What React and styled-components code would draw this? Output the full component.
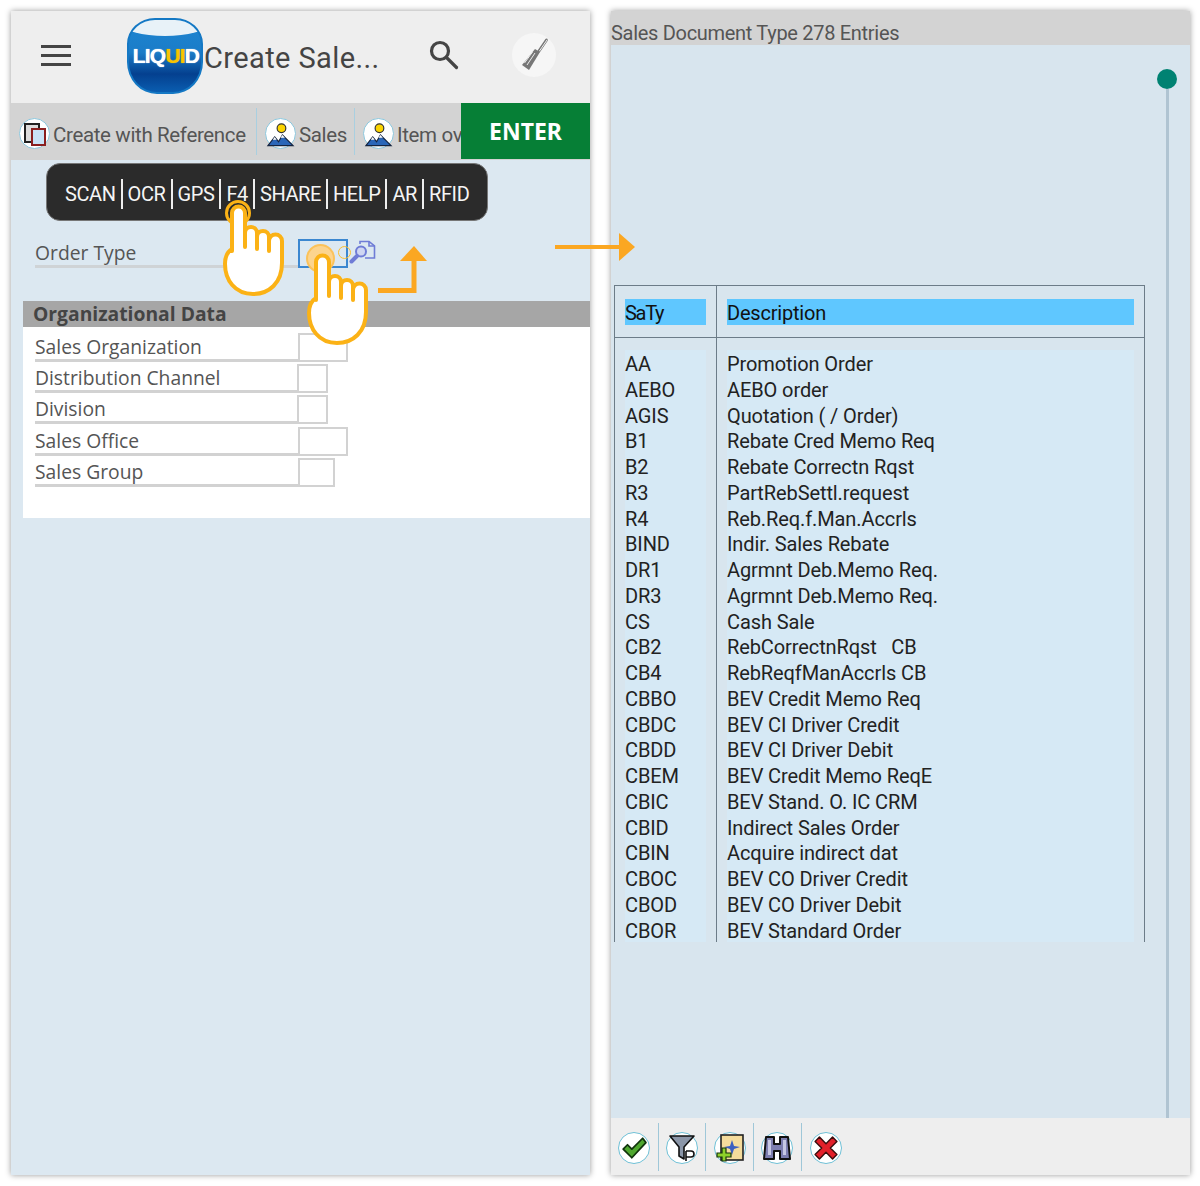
import React from 'react'
import styled, { createGlobalStyle } from 'styled-components'

const GlobalStyle = createGlobalStyle`
  html, body { margin: 0; padding: 0; background: #fff; }
  * { box-sizing: border-box; }
`

const toolbarItems = [
  { label: 'Create with Reference', icon: 'copy', width: 239 },
  { label: 'Sales', icon: 'picture', width: 98 },
  { label: 'Item ov', icon: 'picture', width: 106 },
]
const actions = ['SCAN', 'OCR', 'GPS', 'F4', 'SHARE', 'HELP', 'AR', 'RFID']
const orgFields = [
  { label: 'Sales Organization', width: 50 },
  { label: 'Distribution Channel', width: 31, left: -1 },
  { label: 'Division', width: 31, left: -1 },
  { label: 'Sales Office', width: 50 },
  { label: 'Sales Group', width: 37 },
]
const entries = [
  ['AA', 'Promotion Order'],
  ['AEBO', 'AEBO order'],
  ['AGIS', 'Quotation ( / Order)'],
  ['B1', 'Rebate Cred Memo Req'],
  ['B2', 'Rebate Correctn Rqst'],
  ['R3', 'PartRebSettl.request'],
  ['R4', 'Reb.Req.f.Man.Accrls'],
  ['BIND', 'Indir. Sales Rebate'],
  ['DR1', 'Agrmnt Deb.Memo Req.'],
  ['DR3', 'Agrmnt Deb.Memo Req.'],
  ['CS', 'Cash Sale'],
  ['CB2', 'RebCorrectnRqst   CB'],
  ['CB4', 'RebReqfManAccrls CB'],
  ['CBBO', 'BEV Credit Memo Req'],
  ['CBDC', 'BEV CI Driver Credit'],
  ['CBDD', 'BEV CI Driver Debit'],
  ['CBEM', 'BEV Credit Memo ReqE'],
  ['CBIC', 'BEV Stand. O. IC CRM'],
  ['CBID', 'Indirect Sales Order'],
  ['CBIN', 'Acquire indirect dat'],
  ['CBOC', 'BEV CO Driver Credit'],
  ['CBOD', 'BEV CO Driver Debit'],
  ['CBOR', 'BEV Standard Order'],
]

function CopyIcon() {
  return (
    <svg width="24" height="24" viewBox="0 0 24 24">
      <rect x="2" y="2" width="14" height="18" fill="#ddd" stroke="#222" strokeWidth="2" />
      <rect x="9" y="7" width="13" height="16" fill="#c9e3f7" stroke="#8a2020" strokeWidth="2" />
    </svg>
  )
}

function PictureIcon() {
  return (
    <svg width="30" height="30" viewBox="0 0 30 30">
      <circle cx="16" cy="9" r="4.5" fill="#fbd400" stroke="#333" strokeWidth="1.2" />
      <path d="M2 27 L9 18 L13 23 L17 16 L28 27 Z" fill="#2a66b8" stroke="#14243f" strokeWidth="1.2" />
      <path d="M7 21 L9 18 L11 21 Z M15 19 L17 16 L19.5 19 Z" fill="#fff" />
    </svg>
  )
}

function SearchIcon() {
  return (
    <svg width="30" height="30" viewBox="0 0 30 30" fill="none" stroke="#444" strokeWidth="3.2" strokeLinecap="round">
      <circle cx="11" cy="11" r="8.5" />
      <path d="M17.5 17.5 L27.5 27.5" />
    </svg>
  )
}

function ToolIcon() {
  return (
    <svg width="32" height="36" viewBox="0 0 32 36">
      <path d="M28.5 3 L21 14" stroke="#777" strokeWidth="3" strokeLinecap="round" fill="none" />
      <path d="M29 3 L21.5 14" stroke="#eee" strokeWidth="1" strokeLinecap="round" fill="none" />
      <path d="M22 15 L11 33 L4 28 L17 12 Z" fill="#777" />
      <path d="M17 16 L9 28 M14.5 15 L6.5 26" stroke="#eee" strokeWidth="1" />
    </svg>
  )
}

function LookupIcon() {
  return (
    <svg width="27" height="25" viewBox="0 0 27 25" fill="none" stroke="#6f7cd6" strokeWidth="1.6">
      <path d="M11 4 V1.5 H20 L25.5 6 V18 H16" />
      <path d="M20 1.5 V6 H25.5" />
      <circle cx="12" cy="11.5" r="5" fill="#cfd6f2" strokeWidth="2" />
      <path d="M8 16 L2.5 21.5" strokeWidth="4" strokeLinecap="round" />
    </svg>
  )
}

function HandIcon() {
  return (
    <svg width="64" height="94" viewBox="0 0 64 94" fill="#fff" stroke="#fbb216" strokeWidth="4" strokeLinecap="round" strokeLinejoin="round">
      <path d="M9 48 V10 a6.5 6.5 0 0 1 13 0 V30 a6 6 0 0 1 12 0 V34 a6 6 0 0 1 12 0 V38 a6 6 0 0 1 13 0 V60 C59 80 46 91 30 91 C12 91 2 77 2 61 C2 53 4 49 9 46 Z" />
      <path d="M22 30 V44 M34 34 V46 M46 38 V48" fill="none" />
    </svg>
  )
}

function CheckIcon() {
  return (
    <svg width="28" height="26" viewBox="0 0 24 24">
      <path d="M2 13 L6 9 L10 13 L20 3 L23 7 L10 21 Z" fill="#4ea72e" stroke="#10330c" strokeWidth="1.6" strokeLinejoin="round" />
    </svg>
  )
}

function FilterIcon() {
  return (
    <svg width="26" height="28" viewBox="0 0 26 28">
      <path d="M1 2 H25 L15 13 V25 L10 22 V13 Z" fill="#8b96a8" stroke="#111" strokeWidth="1.6" strokeLinejoin="round" />
      <path d="M17 17 h5 a2.5 2.5 0 0 1 0 6 h-5 M17 17 V27" fill="none" stroke="#111" strokeWidth="1.6" />
    </svg>
  )
}

function NewIcon() {
  return (
    <svg width="28" height="28" viewBox="0 0 28 28">
      <rect x="5" y="1" width="22" height="25" fill="#f4dc9c" stroke="#222" strokeWidth="1.6" />
      <path d="M16 6 L18 12 L24 13 L18 15 L16 21 L14 15 L8 13 L14 12 Z" fill="#3a5fc0" />
      <path d="M1 19 H6 V14 H10 V19 H15 V23 H10 V27 H6 V23 H1 Z" fill="#8ed02a" stroke="#15330c" strokeWidth="1.2" />
    </svg>
  )
}

function BinocularIcon() {
  return (
    <svg width="28" height="26" viewBox="0 0 28 26">
      <path d="M3 2 H11 V9 H17 V2 H25 L27 24 H17 V16 H11 V24 H1 Z" fill="#7d7eb0" stroke="#111" strokeWidth="2" strokeLinejoin="round" />
      <rect x="5" y="5" width="3" height="15" fill="#c7c8e4" />
      <rect x="20" y="5" width="3" height="15" fill="#c7c8e4" />
    </svg>
  )
}

function CloseIcon() {
  return (
    <svg width="24" height="24" viewBox="0 0 22 22">
      <path d="M1 5 L5 1 L11 7 L17 1 L21 5 L15 11 L21 17 L17 21 L11 15 L5 21 L1 17 L7 11 Z" fill="#e2202a" stroke="#3a0d0d" strokeWidth="1.3" strokeLinejoin="round" />
    </svg>
  )
}

const footerIcons = [CheckIcon, FilterIcon, NewIcon, BinocularIcon, CloseIcon]

export default function App() {
  return (
    <>
      <GlobalStyle />
      <Page>
        <Phone>
          <Header>
            <MenuButton><span /><span /><span /></MenuButton>
            <Logo>
              <LogoWave />
              <LogoText>LIQ<em>UI</em>D</LogoText>
            </Logo>
            <Title>Create Sale...</Title>
            <SearchButton><SearchIcon /></SearchButton>
            <ToolButton><ToolIcon /></ToolButton>
          </Header>
          <Toolbar>
            <ToolItems>
              {toolbarItems.map((item, i) => (
                <ToolItem key={item.label} $width={item.width} $first={i === 0} $last={i === toolbarItems.length - 1}>
                  <RoundIcon>{item.icon === 'copy' ? <CopyIcon /> : <PictureIcon />}</RoundIcon>
                  <ToolLabel>{item.label}</ToolLabel>
                </ToolItem>
              ))}
            </ToolItems>
            <EnterButton>ENTER</EnterButton>
          </Toolbar>
          <Content>
            <ActionBar>
              {actions.map((action) => (
                <Action key={action}>{action}</Action>
              ))}
            </ActionBar>
            <OrderRow>
              <OrderLabel>Order Type</OrderLabel>
              <OrderInput />
              <LookupButton><LookupIcon /></LookupButton>
            </OrderRow>
            <Section>
              <SectionTitle>Organizational Data</SectionTitle>
              <Fields>
                {orgFields.map((field) => (
                  <FieldRow key={field.label}>
                    <FieldLabel>{field.label}</FieldLabel>
                    <FieldBox $width={field.width} $left={field.left} />
                  </FieldRow>
                ))}
              </Fields>
            </Section>
          </Content>
          <TouchRing />
          <HandOne><HandIcon /></HandOne>
          <TouchDot />
          <SmallRing />
          <HandTwo><HandIcon /></HandTwo>
          <UpArrow>
            <svg width="50" height="50" viewBox="0 0 50 50">
              <path d="M1 45.5 H37 V12" fill="none" stroke="#fba722" strokeWidth="5" />
              <path d="M37 1 L50 16 H23 Z" fill="#fba722" />
            </svg>
          </UpArrow>
        </Phone>

        <Phone>
          <ListTitle>Sales Document Type 278 Entries</ListTitle>
          <ListBody>
            <TableWrap>
              <TableHead>
                <HeadCell $first><HeadText $tight>SaTy</HeadText></HeadCell>
                <HeadCell><HeadText>Description</HeadText></HeadCell>
              </TableHead>
              <TableBody>
                <Column $first>
                  <Shade>
                    {entries.map(([code]) => <Entry key={code}>{code}</Entry>)}
                  </Shade>
                </Column>
                <Column>
                  <Shade>
                    {entries.map(([code, text]) => <Entry key={code}>{text}</Entry>)}
                  </Shade>
                </Column>
              </TableBody>
            </TableWrap>
            <ScrollTrack>
              <ScrollDot />
              <ScrollLine />
            </ScrollTrack>
          </ListBody>
          <Footer>
            {footerIcons.map((Icon, i) => (
              <FooterItem key={i} $last={i === footerIcons.length - 1}>
                <FooterRound><Icon /></FooterRound>
              </FooterItem>
            ))}
          </Footer>
        </Phone>

        <RightArrow>
          <svg width="80" height="28" viewBox="0 0 80 28">
            <path d="M0 14 H68" stroke="#fba722" strokeWidth="4" />
            <path d="M64 0 L80 14 L64 28 Z" fill="#fba722" />
          </svg>
        </RightArrow>
      </Page>
    </>
  )
}

const Page = styled.div`
  position: relative;
  width: 1200px;
  height: 1186px;
  padding: 11px 10px 11px 11px;
  display: flex;
  gap: 21px;
  background: #fff;
`
const Phone = styled.div`
  position: relative;
  width: 579px;
  height: 1164px;
  display: flex;
  flex-direction: column;
  background: #dce8f1;
  box-shadow: 0 0 6px rgba(0, 0, 0, 0.4);
`
const Header = styled.div`
  height: 92px;
  flex-shrink: 0;
  display: flex;
  align-items: center;
  padding-left: 30px;
  background: #eeeeee;
`
const MenuButton = styled.div`
  width: 30px;
  height: 21px;
  margin: 0 56px 3px 0;
  display: flex;
  flex-direction: column;
  justify-content: space-between;
  span {
    height: 3px;
    background: #444;
  }
`
const Logo = styled.div`
  position: relative;
  width: 76px;
  height: 76px;
  margin: 0 1px 2px 0;
  border-radius: 28px 28px 30px 30px / 26px 26px 32px 32px;
  overflow: hidden;
  background: linear-gradient(#1c86d2 0%, #1b7cc8 45%, #04408f 75%, #0a5db0 100%);
  border: 2px solid #1478c4;
`
const LogoWave = styled.div`
  position: absolute;
  left: -6px;
  right: -6px;
  top: -8px;
  height: 24px;
  background: #e8f2f8;
  border-radius: 0 0 50% 50%;
`
const LogoText = styled.div`
  position: absolute;
  left: 2px;
  right: 0;
  top: 24px;
  text-align: center;
  color: #fff;
  font-family: 'Liberation Sans', sans-serif;
  font-weight: 700;
  font-size: 21px;
  letter-spacing: -0.8px;
  text-shadow: 0 0 1px #fff;
  em {
    color: #f9c400;
    font-style: normal;
    text-shadow: 0 0 1px #f9c400;
  }
`
const Title = styled.div`
  width: 205px;
  margin-top: 2px;
  font-family: Roboto, sans-serif;
  font-size: 29px;
  letter-spacing: 0.4px;
  color: #444;
  white-space: nowrap;
`
const SearchButton = styled.div`
  width: 40px;
  height: 40px;
  margin: 0 0 4px 15px;
  display: flex;
  align-items: center;
  justify-content: center;
`
const ToolButton = styled.div`
  width: 44px;
  height: 44px;
  margin: 0 0 4px 48px;
  border-radius: 50%;
  background: #f6f6f6;
  display: flex;
  align-items: center;
  justify-content: center;
`
const Toolbar = styled.div`
  height: 57px;
  flex-shrink: 0;
  display: flex;
  align-items: flex-start;
  background: #d3d3d3;
`
const ToolItems = styled.div`
  flex: 1;
  min-width: 0;
  display: flex;
  padding: 5px 0 0 7px;
  overflow: hidden;
`
const ToolItem = styled.div`
  width: ${(p) => p.$width}px;
  flex-shrink: 0;
  height: 47px;
  display: flex;
  align-items: center;
  gap: 3px;
  padding-top: 4px;
  padding-left: ${(p) => (p.$first ? '1px' : '8px')};
  border-right: ${(p) => (p.$last ? 'none' : '1px solid #a9cfe0')};
`
const RoundIcon = styled.div`
  width: 31px;
  height: 31px;
  flex-shrink: 0;
  border-radius: 50%;
  border: 1px solid #8cc7dd;
  background: #fff;
  display: flex;
  align-items: center;
  justify-content: center;
`
const ToolLabel = styled.div`
  margin-top: 2px;
  font-family: Roboto, sans-serif;
  font-size: 20.5px;
  letter-spacing: -0.35px;
  color: #555;
  white-space: nowrap;
`
const EnterButton = styled.div`
  flex-shrink: 0;
  width: 129px;
  height: 56px;
  display: flex;
  align-items: center;
  justify-content: center;
  background: #067f36;
  color: #fff;
  font-family: 'Noto Sans', sans-serif;
  font-weight: 700;
  font-size: 23px;
`
const Content = styled.div`
  flex: 1;
  display: flex;
  flex-direction: column;
  background: #dce8f1;
`
const ActionBar = styled.div`
  width: 442px;
  height: 58px;
  margin: 3px 0 0 35px;
  padding: 3px 0 0 18px;
  display: flex;
  align-items: center;
  background: #2b2b2b;
  border-radius: 14px;
  border: 1px solid #777;
`
const Action = styled.div`
  height: 30px;
  display: flex;
  align-items: center;
  padding: 0 5px;
  color: #f5f5f5;
  font-family: Roboto, sans-serif;
  font-size: 20px;
  letter-spacing: -0.4px;
  border-right: 2px solid #eee;
  &:first-child {
    padding-left: 0;
  }
  &:last-child {
    border-right: none;
  }
`
const OrderRow = styled.div`
  height: 30px;
  margin: 18px 0 0 24px;
  display: flex;
  align-items: flex-start;
`
const OrderLabel = styled.div`
  width: 263px;
  height: 29px;
  color: #555;
  font-family: 'Open Sans', sans-serif;
  font-size: 19.3px;
  line-height: 27px;
  border-bottom: 3px solid #cfd3d6;
`
const OrderInput = styled.div`
  width: 50px;
  height: 29px;
  border: 2px solid #3b87d0;
`
const LookupButton = styled.div`
  margin: 1px 0 0 1px;
`
const Section = styled.div`
  margin: 32px 0 0 12px;
  height: 217px;
  background: #fff;
`
const SectionTitle = styled.div`
  height: 26px;
  padding-left: 10px;
  background: #a6a6a6;
  color: #444;
  font-family: 'Open Sans', sans-serif;
  font-weight: 700;
  font-size: 19.3px;
  line-height: 26px;
`
const Fields = styled.div`
  padding: 6px 0 0 12px;
  display: flex;
  flex-direction: column;
  gap: 2.2px;
`
const FieldRow = styled.div`
  height: 29px;
  display: flex;
`
const FieldLabel = styled.div`
  width: 263px;
  height: 29px;
  color: #555;
  font-family: 'Open Sans', sans-serif;
  font-size: 19.3px;
  line-height: 27px;
  border-bottom: 3px solid #d2d2d2;
`
const FieldBox = styled.div`
  width: ${(p) => p.$width}px;
  height: 29px;
  margin-left: ${(p) => p.$left || 0}px;
  background: #fff;
  border: 2px solid #d2d2d2;
`
const TouchRing = styled.div`
  position: absolute;
  left: 214px;
  top: 189px;
  width: 26px;
  height: 26px;
  border-radius: 50%;
  border: 3px solid #fbb216;
  background: #2b2b2b;
`
const HandOne = styled.div`
  position: absolute;
  left: 212px;
  top: 192px;
  line-height: 0;
`
const TouchDot = styled.div`
  position: absolute;
  left: 295px;
  top: 233px;
  width: 29px;
  height: 29px;
  border-radius: 50%;
  background: #fcd48e;
  border: 2px solid #fbc25a;
`
const SmallRing = styled.div`
  position: absolute;
  left: 327px;
  top: 235px;
  width: 13px;
  height: 13px;
  border-radius: 50%;
  border: 1.5px solid #fbc030;
`
const HandTwo = styled.div`
  position: absolute;
  left: 296px;
  top: 241px;
  line-height: 0;
`
const UpArrow = styled.div`
  position: absolute;
  left: 366px;
  top: 234px;
  line-height: 0;
`
const RightArrow = styled.div`
  position: absolute;
  left: 555px;
  top: 233px;
  line-height: 0;
`
const ListTitle = styled.div`
  height: 34px;
  flex-shrink: 0;
  padding-top: 10px;
  background: #d3d3d3;
  color: #555;
  font-family: Roboto, sans-serif;
  font-size: 20px;
  letter-spacing: -0.3px;
  line-height: 24px;
  white-space: nowrap;
`
const ListBody = styled.div`
  flex: 1;
  display: flex;
  padding-left: 3px;
  background: #d8e5ee;
`
const TableWrap = styled.div`
  width: 531px;
  padding-top: 240px;
  display: flex;
  flex-direction: column;
`
const TableHead = styled.div`
  height: 53px;
  display: grid;
  grid-template-columns: 102px 1fr;
  border: 1px solid #6c7c88;
`
const HeadCell = styled.div`
  padding: 13px 10px 0;
  border-right: ${(p) => (p.$first ? '1px solid #6c7c88' : 'none')};
`
const HeadText = styled.div`
  height: 26px;
  background: #5fc7ff;
  color: #111;
  font-family: Roboto, sans-serif;
  font-size: 20px;
  letter-spacing: ${(p) => (p.$tight ? '-1.3px' : '-0.2px')};
  line-height: 28px;
`
const TableBody = styled.div`
  height: 604px;
  display: grid;
  grid-template-columns: 102px 1fr;
  border-left: 1px solid #6c7c88;
  border-right: 1px solid #6c7c88;
`
const Column = styled.div`
  padding: 12px 10px 0;
  border-right: ${(p) => (p.$first ? '1px solid #6c7c88' : 'none')};
`
const Shade = styled.div`
  height: 592px;
  background: #d6e9f5;
`
const Entry = styled.div`
  height: 25.75px;
  line-height: 29px;
  color: #222;
  font-family: Roboto, sans-serif;
  font-size: 20px;
  letter-spacing: -0.1px;
  white-space: pre;
`
const ScrollTrack = styled.div`
  width: 20px;
  margin-left: 12px;
  padding-top: 24px;
  display: flex;
  flex-direction: column;
  align-items: center;
`
const ScrollDot = styled.div`
  width: 20px;
  height: 20px;
  flex-shrink: 0;
  border-radius: 50%;
  background: #008272;
`
const ScrollLine = styled.div`
  flex: 1;
  width: 3px;
  background: #b0c4d2;
`
const Footer = styled.div`
  height: 57px;
  flex-shrink: 0;
  display: flex;
  align-items: center;
  background: #eeeeee;
`
const FooterItem = styled.div`
  width: 47.7px;
  height: 48px;
  padding-top: 3px;
  display: flex;
  align-items: center;
  justify-content: center;
  border-right: ${(p) => (p.$last ? 'none' : '1px solid #9fc7d8')};
`
const FooterRound = styled.div`
  width: 32px;
  height: 32px;
  border-radius: 50%;
  border: 1px solid #6fc0d6;
  background: #fff;
  display: flex;
  align-items: center;
  justify-content: center;
`
